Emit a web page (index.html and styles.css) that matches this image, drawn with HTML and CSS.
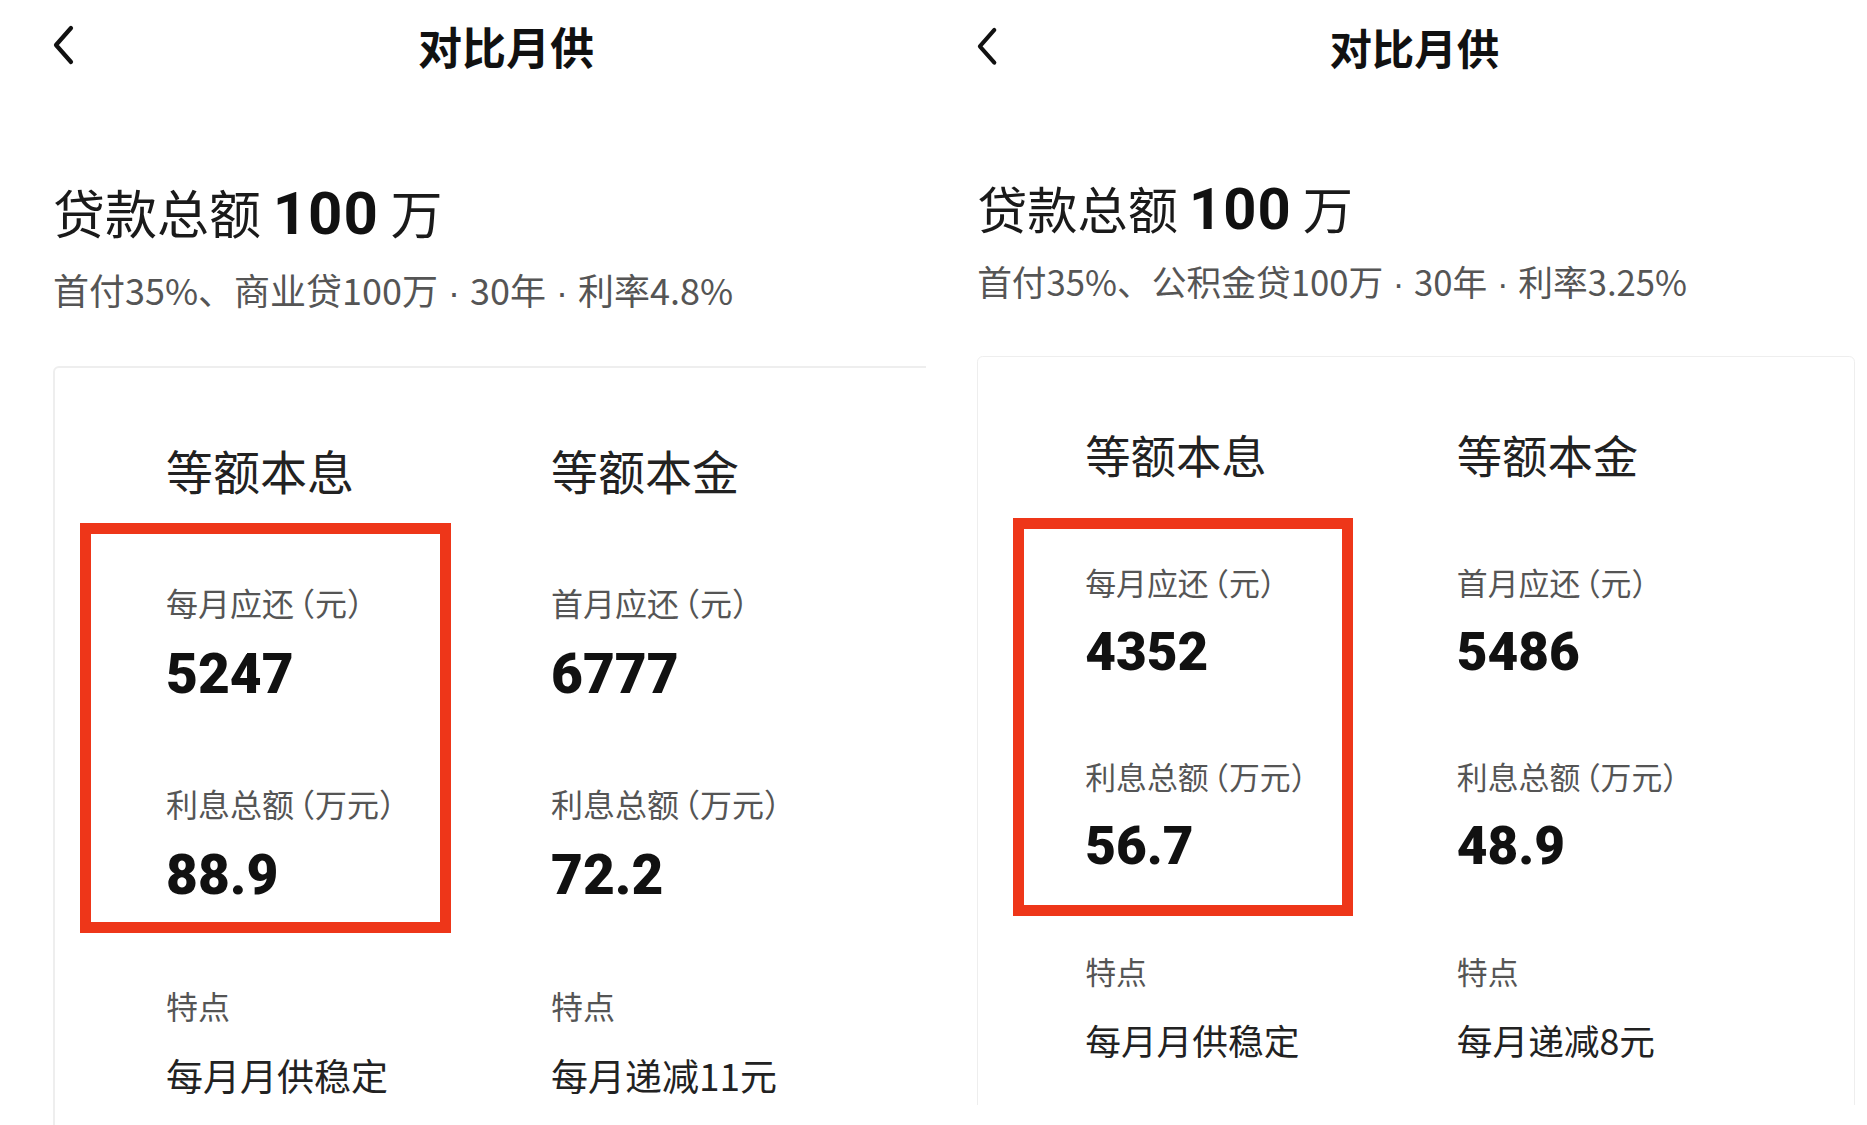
FILE: index.html
```html
<!DOCTYPE html>
<html lang="zh-CN">
<head>
<meta charset="utf-8">
<title>对比月供</title>
<link rel="stylesheet" href="styles.css">
</head>
<body>
<div class="page">
  <section class="panel panel-left">
    <div class="screen">
      <header class="bar">
        <svg class="back" viewBox="0 0 24 40" aria-hidden="true"><path d="M19 3 L4 20 L19 37" fill="none" stroke="#111" stroke-width="4.2" stroke-linecap="round" stroke-linejoin="round"/></svg>
        <h1 class="title">对比月供</h1>
      </header>
      <div class="summary">
        <div class="amount">贷款总额 <b class="amount-num">100</b> 万</div>
        <div class="terms">首付35%、商业贷100万<span class="dot"> · </span>30年<span class="dot"> · </span>利率4.8%</div>
      </div>
      <div class="card">
        <div class="col">
          <div class="kind">等额本息</div>
          <div class="label first">每月应还<span class="gap"></span>（元）</div>
          <div class="value">5247</div>
          <div class="label second">利息总额<span class="gap"></span>（万元）</div>
          <div class="value">88.9</div>
          <div class="label third">特点</div>
          <div class="feat">每月月供稳定</div>
        </div>
        <div class="col">
          <div class="kind">等额本金</div>
          <div class="label first">首月应还<span class="gap"></span>（元）</div>
          <div class="value">6777</div>
          <div class="label second">利息总额<span class="gap"></span>（万元）</div>
          <div class="value">72.2</div>
          <div class="label third">特点</div>
          <div class="feat">每月递减11元</div>
        </div>
      </div>
      <div class="mark mark-left"></div>
    </div>
  </section>
  <section class="panel panel-right">
    <div class="screen">
      <header class="bar">
        <svg class="back" viewBox="0 0 24 40" aria-hidden="true"><path d="M19 3 L4 20 L19 37" fill="none" stroke="#111" stroke-width="4.2" stroke-linecap="round" stroke-linejoin="round"/></svg>
        <h1 class="title">对比月供</h1>
      </header>
      <div class="summary">
        <div class="amount">贷款总额 <b class="amount-num">100</b> 万</div>
        <div class="terms">首付35%、公积金贷100万<span class="dot"> · </span>30年<span class="dot"> · </span>利率3.25%</div>
      </div>
      <div class="card">
        <div class="col">
          <div class="kind">等额本息</div>
          <div class="label first">每月应还<span class="gap"></span>（元）</div>
          <div class="value">4352</div>
          <div class="label second">利息总额<span class="gap"></span>（万元）</div>
          <div class="value">56.7</div>
          <div class="label third">特点</div>
          <div class="feat">每月月供稳定</div>
        </div>
        <div class="col">
          <div class="kind">等额本金</div>
          <div class="label first">首月应还<span class="gap"></span>（元）</div>
          <div class="value">5486</div>
          <div class="label second">利息总额<span class="gap"></span>（万元）</div>
          <div class="value">48.9</div>
          <div class="label third">特点</div>
          <div class="feat">每月递减8元</div>
        </div>
      </div>
      <div class="mark mark-right"></div>
    </div>
  </section>
</div>
</body>
</html>
```

FILE: styles.css
```css
html, body {
  margin: 0;
  padding: 0;
  height: 1125px;
  overflow: hidden;
  background: #fff;
}

.page {
  display: flex;
  width: 1867px;
  height: 1125px;
}

.panel {
  flex-shrink: 0;
  overflow: hidden;
  box-sizing: border-box;
}

.panel-left {
  width: 926px;
  height: 1125px;
}

.panel-right {
  zoom: 0.965;
  width: 975px;
  height: 1145px;
  padding-top: 3px;
}

.screen {
  position: relative;
  width: 1022px;
  font-family: "Noto Sans CJK SC", "Noto Sans", sans-serif;
  color: #111;
}

.bar {
  display: flex;
  align-items: flex-start;
  height: 98px;
  padding-top: 24px;
  box-sizing: border-box;
}

.back {
  flex-shrink: 0;
  width: 24px;
  height: 40px;
  margin-left: 52px;
  margin-top: 1px;
}

.title {
  flex: 1;
  margin: 0 86px 0 0;
  text-align: center;
  font-size: 44px;
  line-height: 44px;
  font-weight: 700;
  color: #111;
}

.summary {
  padding-left: 53px;
}

.amount {
  margin-top: 88px;
  font-size: 52px;
  line-height: 52px;
  color: #1a1a1a;
}

.amount-num {
  font-family: Roboto, "Liberation Sans", sans-serif;
  font-weight: 700;
  font-size: 60px;
  letter-spacing: 1px;
  color: #111;
}

.terms {
  margin-top: 31px;
  font-size: 36px;
  line-height: 36px;
  color: #555;
}

.dot {
  font-family: "Liberation Sans", sans-serif;
  line-height: 0;
}

.card {
  display: grid;
  grid-template-columns: 385px 385px;
  margin: 59px 59px 0 53px;
  padding: 78px 0 0 111px;
  height: 820px;
  border: 2px solid #eeeeee;
  border-radius: 6px;
}

.col {
  display: flex;
  flex-direction: column;
  align-items: flex-start;
}

.kind {
  font-size: 47px;
  line-height: 47px;
  color: #222;
}

.label {
  font-size: 32px;
  line-height: 32px;
  color: #555;
  font-feature-settings: "halt";
}

.gap {
  display: inline-block;
  width: 5px;
}

.label.first { margin-top: 93px; }
.label.second { margin-top: 85px; }
.label.third { margin-top: 86px; }

.value {
  margin-top: 29px;
  font-family: Roboto, "Liberation Sans", sans-serif;
  font-weight: 900;
  font-size: 55px;
  line-height: 55px;
  color: #111;
}

.feat {
  margin-top: 36px;
  font-size: 37px;
  line-height: 37px;
  color: #222;
}

.mark {
  position: absolute;
  box-sizing: border-box;
  border: 11.5px solid #ee3619;
}

.mark-left {
  left: 80px;
  top: 523px;
  width: 371px;
  height: 410px;
}

.mark-right {
  left: 90px;
  top: 534px;
  width: 353px;
  height: 412px;
  border-width: 11.4px;
}
```
